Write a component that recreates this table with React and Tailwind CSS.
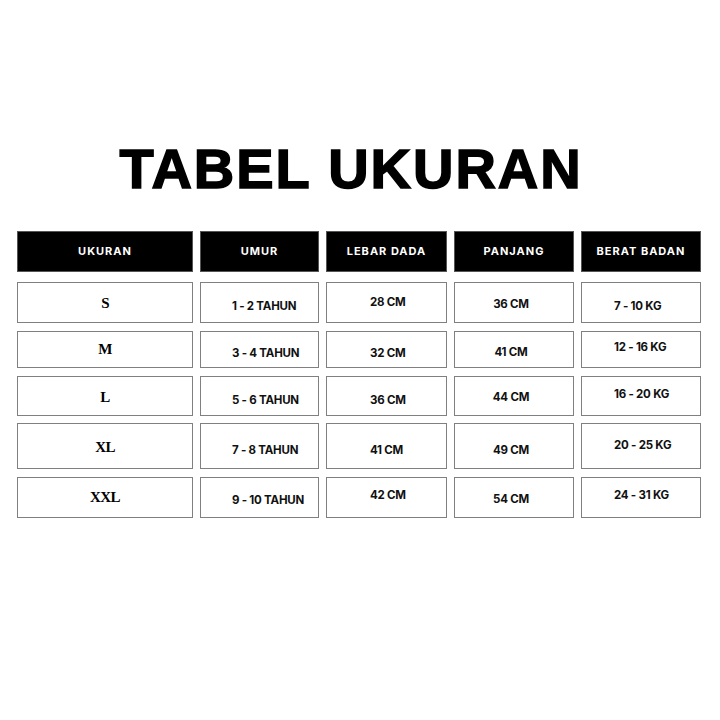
const headers = ['UKURAN', 'UMUR', 'LEBAR DADA', 'PANJANG', 'BERAT BADAN']

const colW = ['w-[176px]', 'w-[119px]', 'w-[121px]', 'w-[120px]', 'w-[120px]']

// per-cell vertical nudges follow the original artwork, which is not perfectly aligned
const rows = [
  {
    box: 'h-[41px] mt-[10px]',
    cells: [
      { text: 'S', pad: 'pb-[1px]' },
      { text: '1 - 2 TAHUN', pad: 'pt-[4px]' },
      { text: '28 CM', pad: 'pb-[4px]' },
      { text: '36 CM', pad: 'pt-0' },
      { text: '7 - 10 KG', pad: 'pt-[4px]' },
    ],
  },
  {
    box: 'h-[37px] mt-[8px]',
    cells: [
      { text: 'M', pad: 'pb-[3px]' },
      { text: '3 - 4 TAHUN', pad: 'pt-[4px]' },
      { text: '32 CM', pad: 'pt-[4px]' },
      { text: '41 CM', pad: 'pt-[2px]' },
      { text: '12 - 16 KG', pad: 'pb-[8px]' },
    ],
  },
  {
    box: 'h-[40px] mt-[8px]',
    cells: [
      { text: 'L', pad: 'pt-[1px]' },
      { text: '5 - 6 TAHUN', pad: 'pt-[5px]' },
      { text: '36 CM', pad: 'pt-[5px]' },
      { text: '44 CM', pad: 'pb-[1px]' },
      { text: '16 - 20 KG', pad: 'pb-[7px]' },
    ],
  },
  {
    box: 'h-[46px] mt-[7px]',
    cells: [
      { text: 'XL', pad: 'pt-[1px]' },
      { text: '7 - 8 TAHUN', pad: 'pt-[5px]' },
      { text: '41 CM', pad: 'pt-[5px]' },
      { text: '49 CM', pad: 'pt-[5px]' },
      { text: '20 - 25 KG', pad: 'pb-[5px]' },
    ],
  },
  {
    box: 'h-[41px] mt-[8px]',
    cells: [
      { text: 'XXL', pad: 'pb-[2px]' },
      { text: '9 - 10 TAHUN', pad: 'pt-[2px]' },
      { text: '42 CM', pad: 'pb-[8px]' },
      { text: '54 CM', pad: 'pt-0' },
      { text: '24 - 31 KG', pad: 'pb-[8px]' },
    ],
  },
]

// horizontal placement of the text inside each column
const colAlign = [
  'justify-center',
  'justify-start pl-[31px]',
  'justify-start pl-[43px]',
  'justify-center pr-[6px]',
  'justify-start pl-[32px]',
]

function HeaderRow() {
  return (
    <div className="flex gap-[7px] h-[41px]">
      {headers.map((h, i) => (
        <div
          key={h}
          className={`${colW[i]} bg-black border border-[#555] flex items-center justify-center`}
        >
          <span className="text-white text-[11px] font-bold tracking-[0.09em] font-['Inter',sans-serif]">
            {h}
          </span>
        </div>
      ))}
    </div>
  )
}

function DataRow({ row }) {
  return (
    <div className={`flex gap-[7px] ${row.box}`}>
      {row.cells.map((c, i) => (
        <div
          key={i}
          className={`${colW[i]} bg-white border-[1.5px] border-[#808080] flex items-center ${colAlign[i]}`}
        >
          <span className={`${c.pad} leading-none`}>
            {i === 0 ? (
              <span className="text-[15px] font-bold tracking-[-0.04em] text-black font-['Liberation_Serif',serif]">
                {c.text}
              </span>
            ) : (
              <span className="text-[11.5px] font-bold tracking-[-0.02em] text-[#111] font-['Inter',sans-serif]">
                {c.text}
              </span>
            )}
          </span>
        </div>
      ))}
    </div>
  )
}

export default function App() {
  return (
    <div className="w-[720px] h-[720px] bg-white overflow-hidden">
      <div className="flex justify-center">
        <h1 className="mt-[141px] ml-[-18px] text-[56px] leading-none font-black tracking-[0.035em] text-black font-['Liberation_Sans',sans-serif] [-webkit-text-stroke:1.5px_black]">
          TABEL UKURAN
        </h1>
      </div>
      <div className="ml-[17px] mt-[34px] flex flex-col">
        <HeaderRow />
        {rows.map((r, i) => (
          <DataRow key={i} row={r} />
        ))}
      </div>
    </div>
  )
}
